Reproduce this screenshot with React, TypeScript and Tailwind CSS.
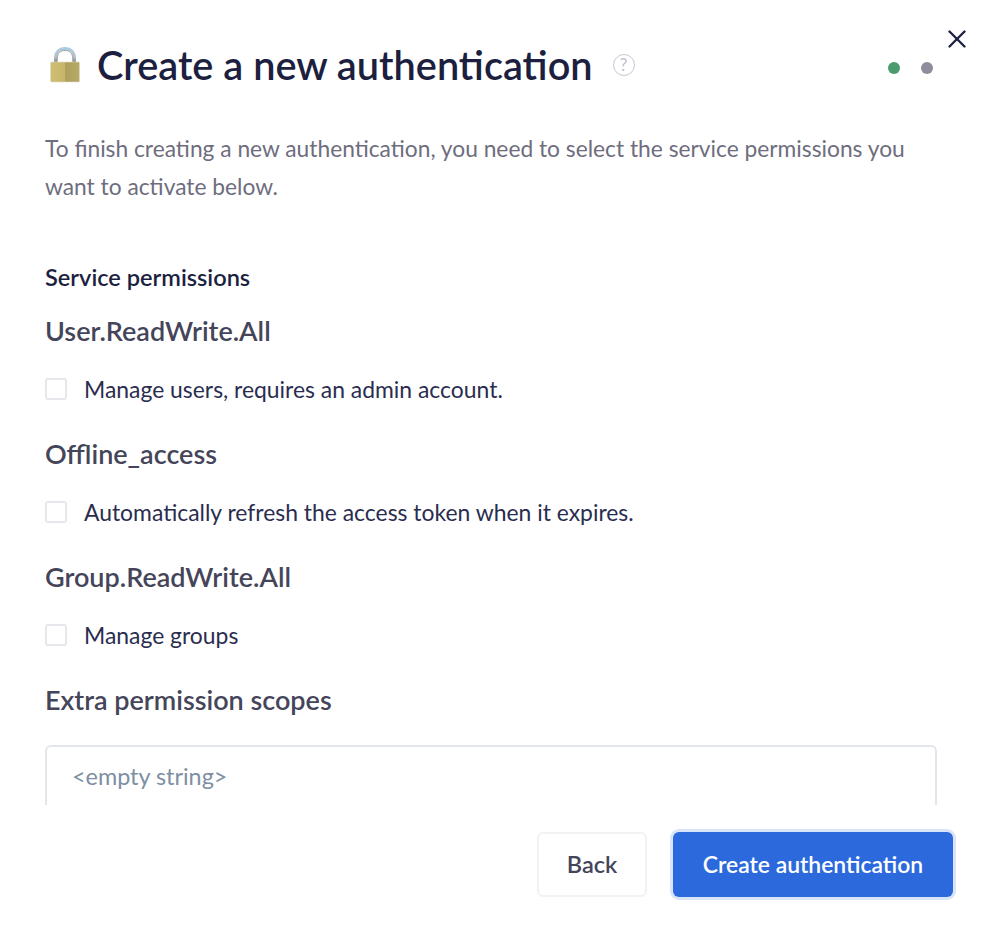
import { X } from 'lucide-react';

const font = { fontFamily: 'Lato, sans-serif' };

const permissions = [
  { scope: 'User.ReadWrite.All', label: 'Manage users, requires an admin account.' },
  { scope: 'Offline_access', label: 'Automatically refresh the access token when it expires.' },
  { scope: 'Group.ReadWrite.All', label: 'Manage groups' },
];

function LockIcon() {
  return (
    <svg width="32" height="36" viewBox="0 0 32 36" className="ml-[4px] shrink-0">
      <defs>
        <linearGradient id="shackle" x1="0" y1="0" x2="0" y2="1">
          <stop offset="0" stopColor="#a9cbe4" />
          <stop offset="0.6" stopColor="#b4c2cc" />
          <stop offset="1" stopColor="#7f807a" />
        </linearGradient>
        <linearGradient id="body" x1="0" y1="0" x2="1" y2="0">
          <stop offset="0" stopColor="#cfc074" />
          <stop offset="0.5" stopColor="#c5b66a" />
          <stop offset="0.52" stopColor="#ada05e" />
          <stop offset="1" stopColor="#b7aa65" />
        </linearGradient>
      </defs>
      <path d="M6.5 16V11C6.5 5 10.5 1.5 16 1.5s9.5 3.5 9.5 9.5v5" fill="none" stroke="url(#shackle)" strokeWidth="3" />
      <path d="M8.3 16V11C8.3 6.5 11.5 3.4 16 3.4s7.7 3.1 7.7 7.6v5" fill="none" stroke="#77786f" strokeWidth="0.7" />
      <rect x="1.5" y="15" width="29" height="20" rx="1" fill="url(#body)" stroke="#dedcc8" strokeWidth="0.6" />
    </svg>
  );
}

export default function App() {
  return (
    <div className="relative h-[941px] w-[1000px] overflow-hidden bg-white" style={font}>
      <button className="absolute right-[28px] top-[24px] text-[#1c1f40]">
        <X className="h-[30px] w-[30px]" strokeWidth={1.9} />
      </button>

      <div className="h-[805px] overflow-hidden pl-[45px] pr-[63px] pt-[42px]">
        {/* Header */}
        <div className="flex h-[46px] items-center">
          <LockIcon />
          <h1 className="ml-[16px] text-[39.7px] font-semibold leading-[46px] text-[#1c1f40]">Create a new authentication</h1>
          <span className="ml-[20px] flex h-[22px] w-[22px] items-center justify-center rounded-full border border-[#c9c7d6] text-[17px] text-[#c0bed0]">?</span>
          <div className="ml-auto mt-[5px] flex items-center gap-[21px] pr-[4px]">
            <span className="h-[12px] w-[12px] rounded-full bg-[#4c9b6e]" />
            <span className="h-[12px] w-[12px] rounded-full bg-[#8e8d9c]" />
          </div>
        </div>

        <p className="mt-[42px] text-[22.78px] leading-[38px] text-[#6e6d7e]">
          To finish creating a new authentication, you need to select the service permissions you want to activate below.
        </p>

        <h2 className="mt-[57px] text-[23.6px] font-semibold leading-[28px] text-[#1c1f40]">Service permissions</h2>

        {permissions.map((p) => (
          <div key={p.scope}>
            <h3 className="mt-[24px] text-[27px] font-semibold leading-[32px] text-[#45455a]">{p.scope}</h3>
            <label className="mt-[27px] flex h-[30px] items-center gap-[17px]">
              <span className="h-[22px] w-[22px] rounded-[3px] border-2 border-[#e6e7ec] bg-white" />
              <span className="text-[22.9px] text-[#2a2d4f]">{p.label}</span>
            </label>
            <div className="h-[10px]" />
          </div>
        ))}

        <h3 className="mt-[24px] text-[27px] font-semibold leading-[32px] text-[#45455a]">Extra permission scopes</h3>
        <div className="mt-[29px] h-[120px] rounded-[6px] border-2 border-[#e2e6ea] px-[25px] pt-[14px] text-[23.4px] leading-[30px] text-[#7e8ea3]">
          &lt;empty string&gt;
        </div>
      </div>

      {/* Footer */}
      <div className="flex justify-end gap-[26px] pr-[47px] pt-[27px]">
        <button className="h-[65px] w-[110px] rounded-[6px] border-2 border-[#f1f2f4] bg-white text-[23.5px] font-semibold text-[#45455a]">Back</button>
        <button className="h-[65px] w-[280px] rounded-[6px] bg-[#2b69dd] text-[22.9px] font-semibold text-white shadow-[0_0_0_3px_#d9e4f8]">Create authentication</button>
      </div>
    </div>
  );
}
